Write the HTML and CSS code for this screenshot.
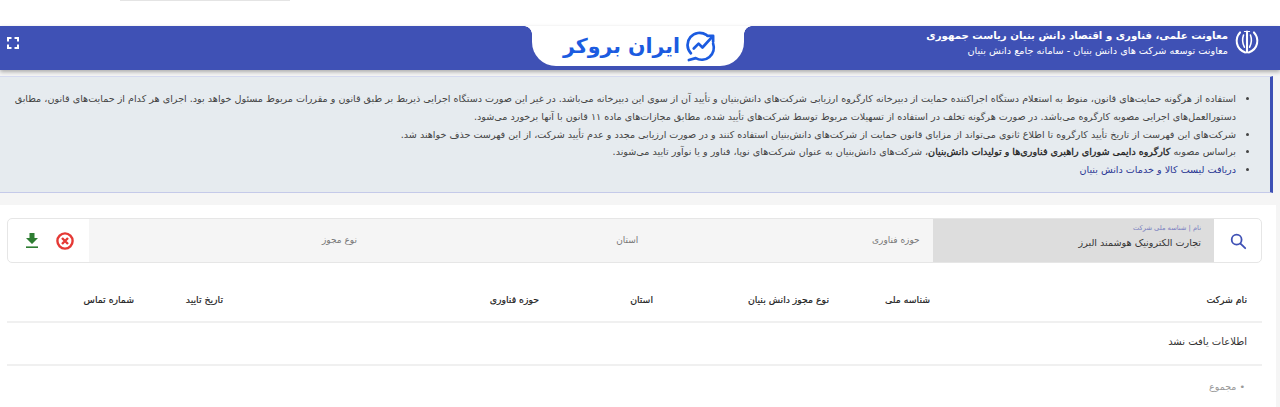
FILE: index.html
```html
<!DOCTYPE html>
<html lang="fa" dir="rtl">
<head>
    <meta charset="UTF-8">
    <meta name="viewport" content="width=device-width, initial-scale=1.0">
    <title>سامانه جامع دانش بنیان</title>
    <link rel="stylesheet" href="styles.css">
</head>
<body>
    <!-- Top strip -->
    <div class="top-strip"><div class="top-cut"></div></div>

    <!-- Header -->
    <header class="site-header">
        <div class="brand">
            <svg class="emblem" viewBox="0 0 30 30" fill="none" stroke="#fff" stroke-linecap="round">
                <path d="M15 3v24" stroke-width="2.400"/>
                <path d="M12 3h6" stroke-width="1.200"/>
                <path d="M11 7c-1.500 4-1.500 9 1 14" stroke-width="1.800"/>
                <path d="M19 7c1.500 4 1.500 9-1 14" stroke-width="1.800"/>
                <path d="M7 4C.5 11 2 23 13 27" stroke-width="2.400"/>
                <path d="M23 4c6.500 7 5 19-6 23" stroke-width="2.400"/>
            </svg>
            <div class="brand-text">
                <strong>معاونت علمی، فناوری و اقتصاد دانش بنیان ریاست جمهوری</strong>
                <span>معاونت توسعه شرکت های دانش بنیان - سامانه جامع دانش بنیان</span>
            </div>
        </div>

        <div class="logo-tab">
            <svg class="logo-icon" viewBox="0 0 32 32" fill="none" stroke="#1b5be0" stroke-width="2.800" stroke-linecap="round" stroke-linejoin="round">
                <path d="M5 23a12.500 12.500 0 0 1 16-19"/>
                <path d="M28 13a12.500 12.500 0 0 1-18 15l-7 2"/>
                <path d="M8 18l5-5 4 4 10-11"/>
                <path d="M22 5h6v6"/>
            </svg>
            <span class="logo-text">ایران بروکر</span>
        </div>

        <svg class="expand-icon" viewBox="0 0 12 12" fill="none" stroke="#fff" stroke-width="2">
            <path d="M1 4.500V1h3.500M7.500 1H11v3.500M11 7.500V11H7.500M4.500 11H1V7.500"/>
        </svg>
    </header>

    <!-- Notice -->
    <section class="notice">
        <ul>
            <li>استفاده از هرگونه حمایت‌های قانون، منوط به استعلام دستگاه اجراکننده حمایت از دبیرخانه کارگروه ارزیابی شرکت‌های دانش‌بنیان و تأیید آن از سوی این دبیرخانه می‌باشد. در غیر این صورت دستگاه اجرایی ذیربط بر طبق قانون و مقررات مربوط مسئول خواهد بود. اجرای هر کدام از حمایت‌های قانون، مطابق دستورالعمل‌های اجرایی مصوبه کارگروه می‌باشد. در صورت هرگونه تخلف در استفاده از تسهیلات مربوط توسط شرکت‌های تأیید شده، مطابق مجازات‌های ماده ۱۱ قانون با آنها برخورد می‌شود.</li>
            <li>شرکت‌های این فهرست از تاریخ تأیید کارگروه تا اطلاع ثانوی می‌تواند از مزایای قانون حمایت از شرکت‌های دانش‌بنیان استفاده کنند و در صورت ارزیابی مجدد و عدم تأیید شرکت، از این فهرست حذف خواهند شد.</li>
            <li>براساس مصوبه <b>کارگروه دایمی شورای راهبری فناوری‌ها و تولیدات دانش‌بنیان</b>، شرکت‌های دانش‌بنیان به عنوان شرکت‌های نوپا، فناور و یا نوآور تایید می‌شوند.</li>
            <li><a href="#list">دریافت لیست کالا و خدمات دانش بنیان</a></li>
        </ul>
    </section>

    <!-- Main card -->
    <main class="card">
        <div class="filters">
            <div class="search-btn">
                <svg viewBox="0 0 20 20" fill="none" stroke="#3f51b5" stroke-width="2" stroke-linecap="round">
                    <circle cx="8.500" cy="8.500" r="5.500"/>
                    <path d="M12.800 12.800L18 18"/>
                </svg>
            </div>
            <div class="field field-active">
                <label>نام | شناسه ملی شرکت</label>
                <span>تجارت الکترونیک هوشمند البرز</span>
            </div>
            <div class="field">حوزه فناوری</div>
            <div class="field">استان</div>
            <div class="field">نوع مجوز</div>
            <div class="actions">
                <svg class="clear-icon" viewBox="0 0 18 18" fill="none" stroke="#e53935" stroke-width="2.400">
                    <circle cx="9" cy="9" r="7.600"/>
                    <path d="M6 6l6 6M12 6l-6 6"/>
                </svg>
                <svg class="download-icon" viewBox="0 0 12 15" fill="#2e7d32">
                    <path d="M3.500 0h5v5H12L6 11 0 5h3.500z"/>
                    <rect y="13.400" width="12" height="1.600"/>
                </svg>
            </div>
        </div>

        <div class="table-row table-head">
            <div>نام شرکت</div>
            <div>شناسه ملی</div>
            <div>نوع مجوز دانش بنیان</div>
            <div>استان</div>
            <div>حوزه فناوری</div>
            <div>تاریخ تایید</div>
            <div>شماره تماس</div>
        </div>
        <div class="empty-row">اطلاعات یافت نشد</div>
        <div class="total">• مجموع</div>
    </main>
</body>
</html>
```

FILE: styles.css
```css
* {
    box-sizing: border-box;
}
body {
    margin: 0;
    padding: 0;
    height: 407px;
    overflow: hidden;
    background-color: #f5f5f5;
    color: #333;
    font-family: "DejaVu Sans", sans-serif;
    font-size: 9px;
}
.top-strip {
    height: 26px;
    background: #fff;
}
.top-cut {
    width: 170px;
    height: 1px;
    margin-right: 990px;
    background: #e4e4e4;
}
.site-header {
    display: flex;
    align-items: flex-start;
    justify-content: space-between;
    height: 44px;
    padding: 0 20px 0 7px;
    background-color: #3f51b5;
    color: #fff;
    box-shadow: 0 2px 4px rgba(0,0,0,0.3);
}
.brand {
    display: flex;
    align-items: center;
    gap: 6px;
    width: 336px;
    height: 32px;
}
.emblem {
    width: 26px;
    height: 26px;
    flex: none;
}
.brand-text {
    display: flex;
    flex-direction: column;
    gap: 1px;
    white-space: nowrap;
}
.brand-text strong {
    font-size: 10.200px;
    line-height: 15px;
}
.brand-text span {
    font-size: 9.700px;
    line-height: 13px;
}
.logo-tab {
    position: relative;
    display: flex;
    align-items: center;
    justify-content: center;
    gap: 6px;
    width: 212px;
    height: 40px;
    margin-left: 333px;
    padding-left: 4px;
    background: #fff;
    border-radius: 0 0 24px 24px;
}
.logo-tab::before,
.logo-tab::after {
    content: "";
    position: absolute;
    top: 0;
    width: 8px;
    height: 8px;
}
.logo-tab::before {
    left: -8px;
    background: radial-gradient(circle at 0 100%, #3f51b5 7.500px, #fff 8px);
}
.logo-tab::after {
    right: -8px;
    background: radial-gradient(circle at 100% 100%, #3f51b5 7.500px, #fff 8px);
}
.logo-icon {
    width: 31px;
    height: 31px;
}
.logo-text {
    color: #1b5be0;
    font-size: 20.500px;
    font-weight: bold;
    white-space: nowrap;
}
.expand-icon {
    width: 12px;
    height: 12px;
    margin-top: 11px;
}
.notice {
    height: 117px;
    margin: 6px 7px 0 0;
    padding: 13px 34px 0 0;
    background-color: #e6ebef;
    border-top: 1px solid #d5daf0;
    border-bottom: 1px solid #c5cae9;
    border-right: 3px solid #3f51b5;
}
.notice ul {
    margin: 0;
    padding: 0 0 0 8px;
    list-style-type: disc;
    font-size: 9.600px;
    line-height: 17.750px;
    color: #444;
}
.notice a {
    color: #283593;
    text-decoration: none;
}
.notice b {
    color: #222;
    font-weight: normal;
    -webkit-text-stroke: 0.300px #222;
}
.card {
    margin: 12px 4px 0 0;
    padding: 13px 14px 0 7px;
    height: 202px;
    background: #fff;
}
.filters {
    display: flex;
    height: 45px;
    border: 1px solid #e6e6e6;
    border-radius: 5px;
}
.search-btn {
    display: flex;
    align-items: center;
    justify-content: center;
    width: 47px;
    flex: none;
}
.search-btn svg {
    width: 18px;
    height: 18px;
}
.field {
    display: flex;
    flex-direction: column;
    justify-content: center;
    width: 281.330px;
    flex: none;
    padding: 0 13px 2px;
    background: #f5f5f5;
    color: #777;
}
.field-active {
    padding-bottom: 7px;
    background: #ddd;
    color: #333;
    font-size: 9.600px;
}
.field-active label {
    margin-bottom: 2px;
    color: #7a7fc0;
    font-size: 6.700px;
    line-height: 10px;
}
.field-active span {
    line-height: 16px;
}
.actions {
    display: flex;
    align-items: center;
    justify-content: center;
    gap: 18px;
    flex: 1;
    padding-left: 4px;
}
.clear-icon {
    width: 18px;
    height: 18px;
}
.download-icon {
    width: 12px;
    height: 15px;
}
.table-row {
    display: grid;
    grid-template-columns: 317px 101px 176px 114px 316px 89px 142px;
}
.table-head {
    align-items: center;
    height: 60px;
    padding-top: 15px;
    font-size: 9.300px;
    color: #222;
    -webkit-text-stroke: 0.200px #222;
    border-bottom: 2px solid #f0f0f0;
}
.table-head div {
    padding-right: 15px;
    white-space: nowrap;
}
.empty-row {
    height: 43px;
    padding: 0 15px;
    line-height: 38px;
    font-size: 10px;
    border-bottom: 2px solid #f0f0f0;
}
.total {
    padding: 15px 17px 0 0;
    font-size: 9.500px;
    color: #999;
}
```
